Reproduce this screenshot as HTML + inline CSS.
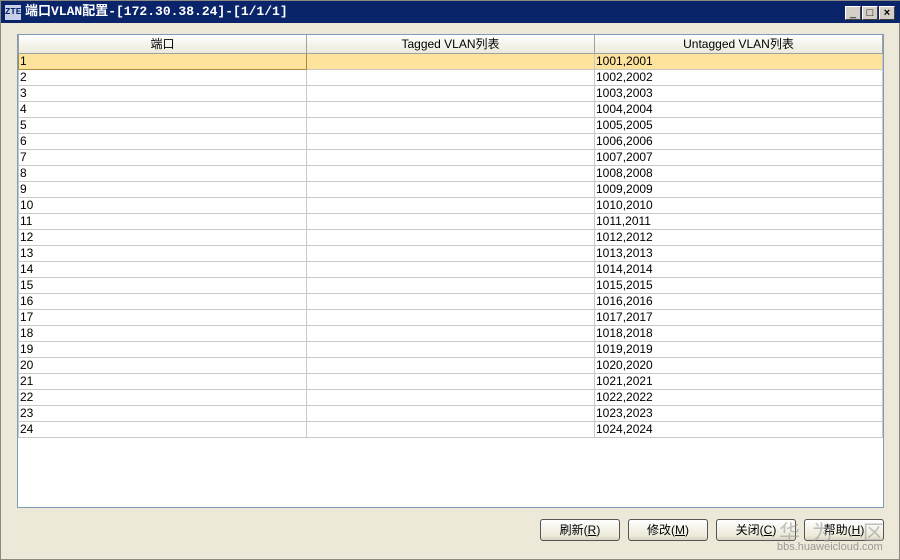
<!DOCTYPE html><html><head><meta charset="utf-8"><style>
*{margin:0;padding:0;box-sizing:border-box}
html,body{width:900px;height:560px;overflow:hidden}
body{background:#ece9d8;font-family:"Liberation Sans","Noto Sans CJK SC",sans-serif;font-size:12px;position:relative;border:1px solid #8c8a80}
.tb{position:absolute;left:0;top:0;width:900px;height:22px;background:#0a246a;color:#fff;font-weight:bold;font-size:13px;line-height:22px;padding-left:24px;font-family:"Liberation Mono","Noto Sans CJK SC",monospace}
.ic{position:absolute;left:4px;top:4px;width:16px;height:15px;background:#c8d0e8;color:#0a246a;font-size:9px;line-height:15px;text-align:center}
.wb{position:absolute;top:5px;width:16px;height:14px;background:#d4d0c8;border:1px solid;border-color:#fff #404040 #404040 #fff;color:#000;font-size:11px;line-height:12px;text-align:center}
.tbl{position:absolute;left:16px;top:33px;width:867px;height:474px;background:#fff;border:1px solid #7f9db9}
table{border-collapse:collapse;width:865px;table-layout:fixed}
th{height:18px;font-weight:normal;background:linear-gradient(#fff,#ebeadb);border:1px solid #a0a0a0;border-top:none;font-size:12px}
td{height:16px;border:1px solid #c8c8c8;padding-left:1px;font-size:12px;line-height:14px;white-space:nowrap}
tr.sel td{background:#fde39c}
tr.sel td:first-child{border:1px solid #a88a40}
.btn{position:absolute;top:518px;width:80px;height:22px;border:1px solid #555;border-radius:3px;background:linear-gradient(#fff,#ece9d8 80%,#d6d0c0);text-align:center;line-height:20px;font-size:12px}
.wm{position:absolute;left:778px;top:516px;color:#999;font-size:21px;letter-spacing:12px;opacity:.6;white-space:nowrap}
.wm2{position:absolute;left:776px;top:540px;color:#999;font-size:11px;white-space:nowrap}
</style></head><body>
<div class="tb"><div class="ic">ZTE</div>端口VLAN配置-[172.30.38.24]-[1/1/1]</div>
<div class="wb" style="left:844px">_</div><div class="wb" style="left:861px">□</div><div class="wb" style="left:878px;font-weight:bold">×</div>
<div class="tbl"><table>
<tr><th>端口</th><th>Tagged VLAN列表</th><th>Untagged VLAN列表</th></tr>
<tr class="sel"><td>1</td><td></td><td>1001,2001</td></tr>
<tr><td>2</td><td></td><td>1002,2002</td></tr>
<tr><td>3</td><td></td><td>1003,2003</td></tr>
<tr><td>4</td><td></td><td>1004,2004</td></tr>
<tr><td>5</td><td></td><td>1005,2005</td></tr>
<tr><td>6</td><td></td><td>1006,2006</td></tr>
<tr><td>7</td><td></td><td>1007,2007</td></tr>
<tr><td>8</td><td></td><td>1008,2008</td></tr>
<tr><td>9</td><td></td><td>1009,2009</td></tr>
<tr><td>10</td><td></td><td>1010,2010</td></tr>
<tr><td>11</td><td></td><td>1011,2011</td></tr>
<tr><td>12</td><td></td><td>1012,2012</td></tr>
<tr><td>13</td><td></td><td>1013,2013</td></tr>
<tr><td>14</td><td></td><td>1014,2014</td></tr>
<tr><td>15</td><td></td><td>1015,2015</td></tr>
<tr><td>16</td><td></td><td>1016,2016</td></tr>
<tr><td>17</td><td></td><td>1017,2017</td></tr>
<tr><td>18</td><td></td><td>1018,2018</td></tr>
<tr><td>19</td><td></td><td>1019,2019</td></tr>
<tr><td>20</td><td></td><td>1020,2020</td></tr>
<tr><td>21</td><td></td><td>1021,2021</td></tr>
<tr><td>22</td><td></td><td>1022,2022</td></tr>
<tr><td>23</td><td></td><td>1023,2023</td></tr>
<tr><td>24</td><td></td><td>1024,2024</td></tr>
</table></div>
<div class="btn" style="left:539px">刷新(<u>R</u>)</div>
<div class="btn" style="left:627px">修改(<u>M</u>)</div>
<div class="btn" style="left:715px">关闭(<u>C</u>)</div>
<div class="btn" style="left:803px">帮助(<u>H</u>)</div>
<div class="wm">华为 区</div>
<div class="wm2">bbs.huaweicloud.com</div>
</body></html>
